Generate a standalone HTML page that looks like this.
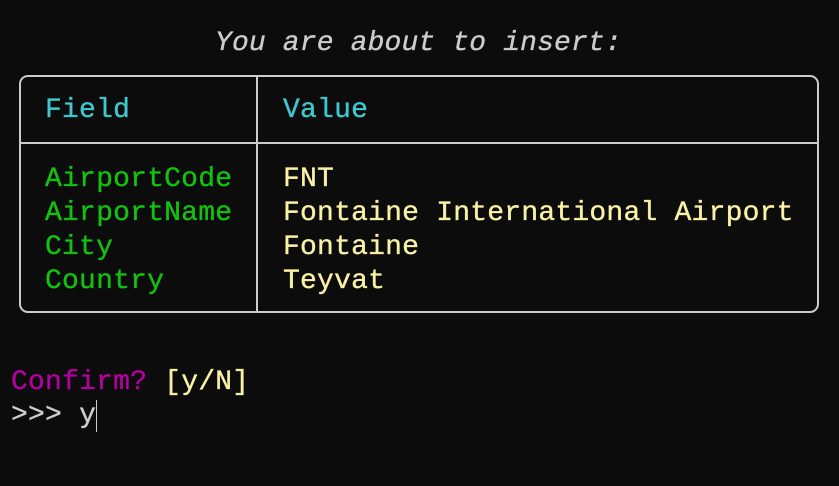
<!DOCTYPE html>
<html><head><meta charset="utf-8"><style>
html,body{margin:0;padding:0;background:#0c0c0c;width:839px;height:486px;overflow:hidden;}
.t{position:absolute;font-family:"Liberation Mono",monospace;font-size:28px;line-height:34px;white-space:pre;letter-spacing:0.22px;-webkit-text-stroke:0.35px currentColor;}
.box{position:absolute;left:19px;top:75px;width:796px;height:234px;border:2px solid #cccccc;border-radius:9px;}
.v{position:absolute;left:256px;top:76px;width:2px;height:237px;background:#cccccc;}
.h{position:absolute;left:20px;top:142px;width:798px;height:2px;background:#cccccc;}
.cy{color:#3fc8cf}.g{color:#13c10f}.y{color:#f9f1a5}.m{color:#b4009e}.w{color:#cccccc}
</style></head><body>
<div class="t w" style="left:215px;top:27px;font-style:italic;letter-spacing:0.15px">You are about to insert:</div>
<div class="box"></div><div class="v"></div><div class="h"></div>
<div class="t cy" style="left:45px;top:94px">Field</div>
<div class="t cy" style="left:283px;top:94px">Value</div>
<div class="t g" style="left:45px;top:163px">AirportCode
AirportName
City
Country</div>
<div class="t y" style="left:283px;top:163px">FNT
Fontaine International Airport
Fontaine
Teyvat</div>
<div class="t" style="left:11px;top:366px"><span class="m">Confirm?</span> <span class="y">[y/N]</span></div>
<div class="t w" style="left:11px;top:399px">&gt;&gt;&gt; y</div>
<div style="position:absolute;left:96px;top:400px;width:1px;height:32px;background:#cccccc"></div>
</body></html>
